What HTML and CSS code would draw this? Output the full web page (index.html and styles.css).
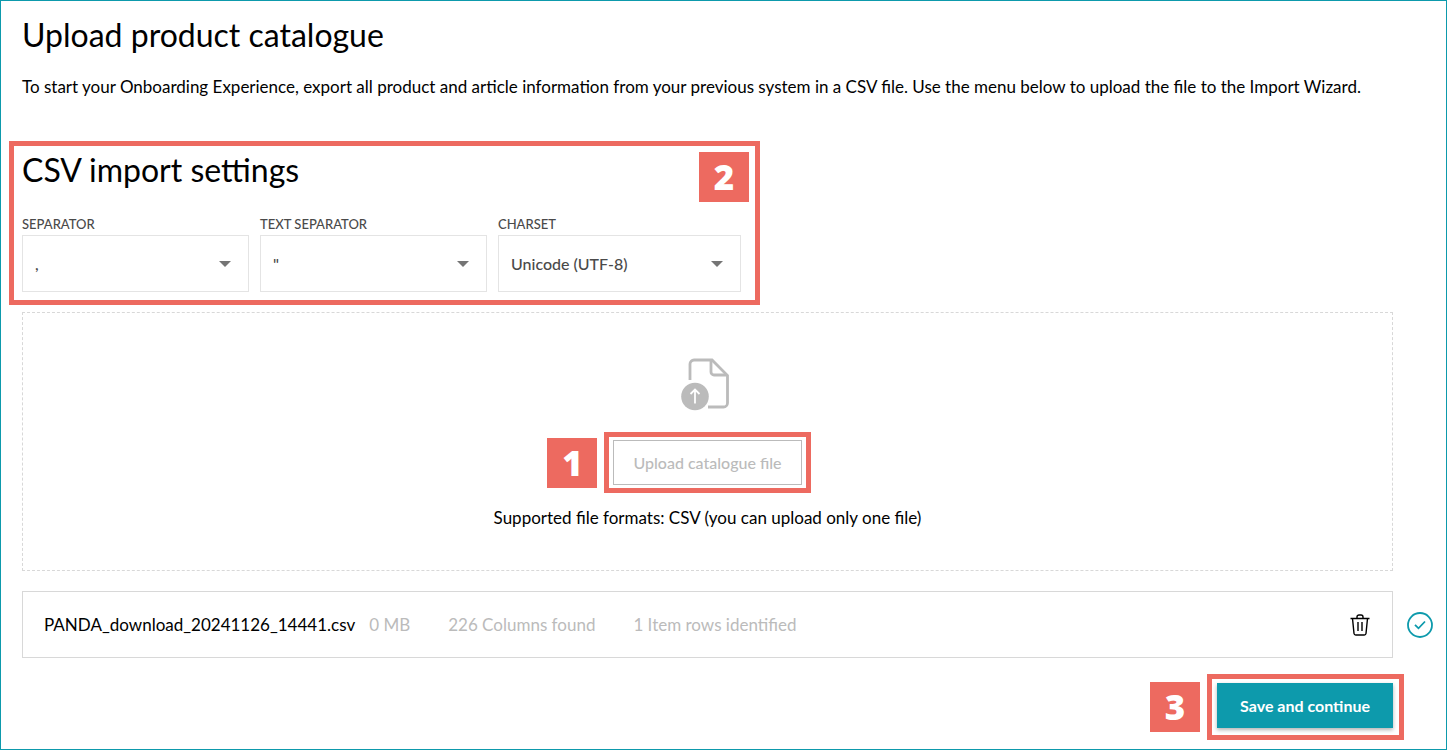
FILE: index.html
```html
<!DOCTYPE html>
<html lang="en">
<head>
    <meta charset="UTF-8">
    <meta name="viewport" content="width=device-width, initial-scale=1.0">
    <title>Upload product catalogue</title>
    <link rel="stylesheet" href="styles.css">
</head>
<body>
<main class="page">
    <h1 class="title">Upload product catalogue</h1>
    <p class="intro">To start your Onboarding Experience, export all product and article information from your previous system in a CSV file. Use the menu below to upload the file to the Import Wizard.</p>

    <section class="settings highlight">
        <h2 class="title">CSV import settings</h2>
        <span class="step step-corner">2</span>
        <div class="fields">
            <div class="field">
                <label for="separator">SEPARATOR</label>
                <div class="select">
                    <select id="separator">
                        <option>,</option>
                    </select>
                </div>
            </div>
            <div class="field">
                <label for="textSeparator">TEXT SEPARATOR</label>
                <div class="select">
                    <select id="textSeparator">
                        <option>"</option>
                    </select>
                </div>
            </div>
            <div class="field field-wide">
                <label for="charset">CHARSET</label>
                <div class="select">
                    <select id="charset">
                        <option>Unicode (UTF-8)</option>
                    </select>
                </div>
            </div>
        </div>
    </section>

    <section class="dropzone">
        <svg width="54" height="54" viewBox="0 0 54 54" fill="none">
            <path d="M9 23V7a4 4 0 0 1 4-4H31L46.500 18.500V46a4 4 0 0 1-4 4H27" stroke="#bbb" stroke-width="2.800"/>
            <path d="M30 3v12a3 3 0 0 0 3 3h13" stroke="#bbb" stroke-width="2.800"/>
            <circle cx="14" cy="39.500" r="13.800" fill="#bbb"/>
            <path d="M14 46.500V33M9.500 37l4.500-4.500l4.500 4.500" stroke="#fff" stroke-width="1.800"/>
        </svg>
        <div class="upload highlight">
            <span class="step step-left">1</span>
            <button type="button" class="btn-upload">Upload catalogue file</button>
        </div>
        <p class="formats">Supported file formats: CSV (you can upload only one file)</p>
    </section>

    <div class="file-row">
        <div class="file">
            <span class="file-name">PANDA_download_20241126_14441.csv</span>
            <span class="file-info">0 MB</span>
            <span class="file-info">226 Columns found</span>
            <span class="file-info">1 Item rows identified</span>
            <button type="button" class="btn-delete" aria-label="Delete file">
                <svg width="20" height="22" viewBox="0 0 20 22" fill="none" stroke="#000" stroke-width="1.400">
                    <path d="M.5 4.500h19M7 4V3a2 2 0 0 1 2-2h2a2 2 0 0 1 2 2v1"/>
                    <path d="M2.500 4.500l1.500 15q.2 1.500 1.700 1.500h8.600q1.500 0 1.700-1.500l1.500-15M8 8v9M12 8v9"/>
                </svg>
            </button>
        </div>
        <svg width="26" height="26" viewBox="0 0 26 26" fill="none" stroke="#0d9aac" stroke-width="1.800">
            <circle cx="13" cy="13" r="12"/>
            <path d="M8 12.800l3.500 3.500l6.500-6.800"/>
        </svg>
    </div>

    <div class="actions">
        <span class="step">3</span>
        <div class="save highlight">
            <button type="button" class="btn-save">Save and continue</button>
        </div>
    </div>
</main>
</body>
</html>
```

FILE: styles.css
```css
* {
    box-sizing: border-box;
}

body {
    font-family: Lato, sans-serif;
    font-size: 17px;
    line-height: 24px;
    color: #000;
    background-color: #fff;
    margin: 0;
}

.page {
    min-height: 100vh;
    border: 1px solid #0d9aac;
    padding: 14px 53px 9px 21px;
}

.title {
    font-size: 32px;
    font-weight: 400;
    line-height: 40px;
    margin: 0;
}

.intro {
    margin: 20px 0 42px;
}

.highlight {
    border: 5px solid #ed6a60;
}

/* numbered step markers */
.step {
    width: 50px;
    height: 50px;
    background-color: #ed6a60;
    color: #fff;
    font-family: "Open Sans", sans-serif;
    font-size: 35px;
    font-weight: 800;
    line-height: 50px;
    text-align: center;
}

.step-corner {
    position: absolute;
    top: 6px;
    right: 6px;
}

.step-left {
    position: absolute;
    top: 1px;
    right: 100%;
    margin-right: 12px;
}

.settings {
    position: relative;
    width: fit-content;
    margin-left: -13px;
    padding: 4px 14px 8px 8px;
}

.fields {
    display: flex;
    gap: 11px;
    margin-top: 24px;
}

.field {
    width: 227px;
}

.field-wide {
    width: 243px;
}

.field label {
    display: block;
    font-size: 13px;
    font-weight: 500;
    line-height: 20px;
    color: #4a4a4a;
    margin-bottom: 1px;
}

.select {
    position: relative;
}

.select::after {
    content: "";
    position: absolute;
    top: 26px;
    right: 18px;
    border: 6px solid transparent;
    border-top-color: #757575;
    border-bottom: 0;
    pointer-events: none;
}

select {
    appearance: none;
    width: 100%;
    height: 57px;
    padding: 0 12px;
    border: 1px solid #e4e4e4;
    border-radius: 0;
    background-color: #fff;
    color: #4a4a4a;
    font: inherit;
    font-size: 16px;
    font-weight: 500;
}

.dropzone {
    display: flex;
    flex-direction: column;
    align-items: center;
    margin-top: 7px;
    padding: 44px 0 27px;
    border: 1px dashed #d8d8d8;
}

.upload {
    position: relative;
    margin-top: 21px;
    padding: 3px 4px;
}

button {
    font: inherit;
    cursor: pointer;
}

.btn-upload {
    display: block;
    height: 45px;
    padding: 0 19px;
    border: 1px solid #bbb;
    background-color: #fff;
    color: #bbb;
    font-size: 16px;
    font-weight: 500;
}

.formats {
    margin: 13px 0;
}

.file-row {
    display: flex;
    align-items: center;
    gap: 14px;
    margin: 20px -40px 16px 0;
}

.file {
    display: flex;
    flex: 1;
    align-items: center;
    height: 67px;
    padding: 0 22px 0 21px;
    border: 1px solid #d8d8d8;
}

.file-name {
    margin-right: 14px;
}

.file-info {
    color: #bbb;
    margin-right: 38px;
}

.btn-delete {
    display: flex;
    margin-left: auto;
    padding: 0;
    border: 0;
    background: none;
}

.actions {
    display: flex;
    justify-content: flex-end;
    align-items: center;
    gap: 7px;
    margin-right: -11px;
}

.save {
    padding: 4px 6px 7px 5px;
}

.btn-save {
    display: block;
    height: 45px;
    padding: 0 23px;
    border: 0;
    background-color: #0d9aac;
    box-shadow: 0 2px 4px rgba(0, 0, 0, 0.3);
    color: #fff;
    font-size: 16px;
    font-weight: 700;
}
```
